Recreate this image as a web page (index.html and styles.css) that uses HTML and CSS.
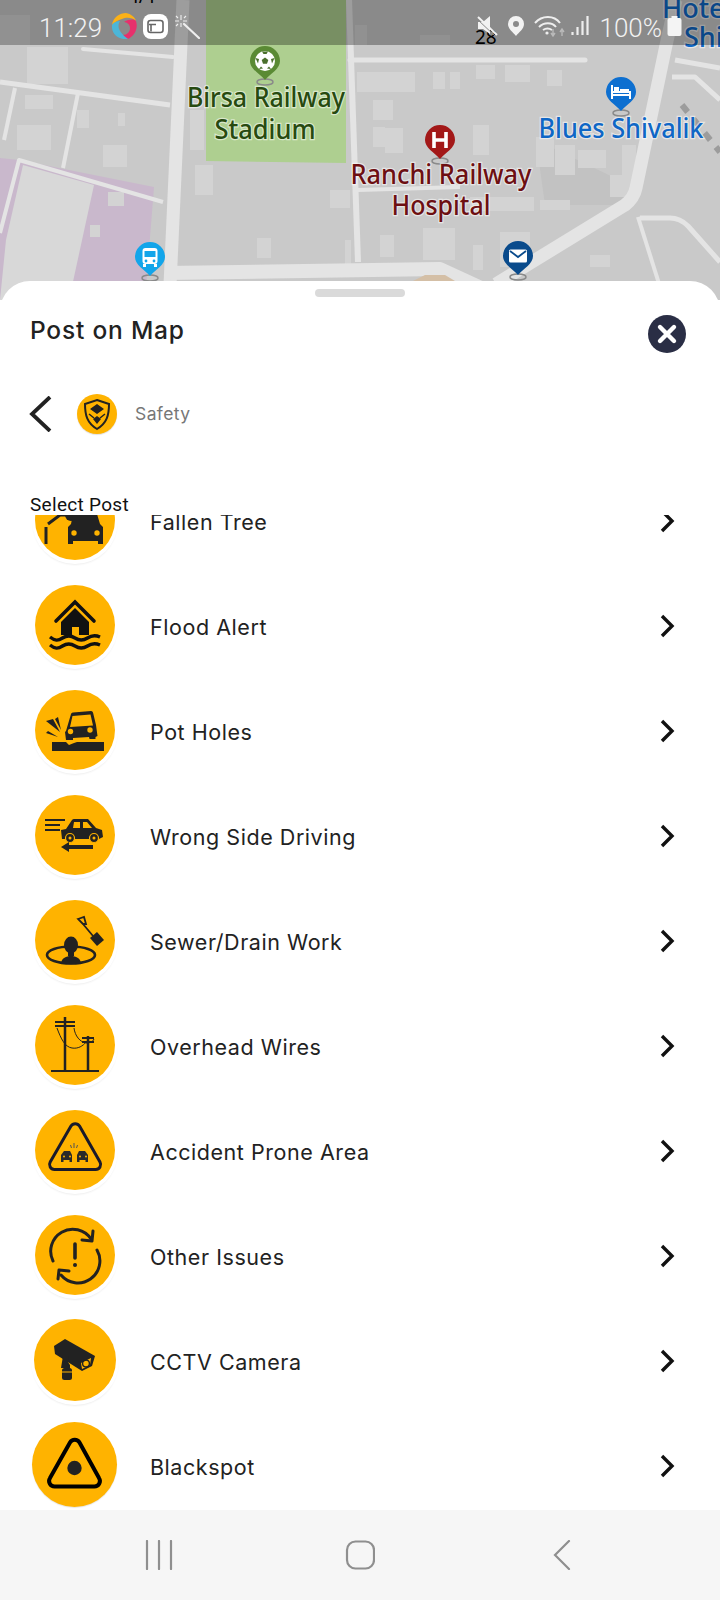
FILE: index.html
```html
<!DOCTYPE html>
<html lang="en">
<head>
<meta charset="utf-8">
<title>Post on Map</title>
<link rel="stylesheet" href="styles.css">
</head>
<body>
<div class="phone">
  <svg class="map" viewBox="0 0 720 300" width="720" height="300" aria-hidden="true">
    <rect width="720" height="300" fill="#c9c9c9"/>
    <polygon points="206,0 346,0 346,163 206,161" fill="#aecf90"/>
    <polygon points="0,158 19,160 154,187 145,300 0,300" fill="#c9b8cc"/>
    <polygon points="23,165 94,185 69,300 0,300 6,240" fill="#d8d8d8"/>
    <polygon points="536,140 640,190 630,205 545,205" fill="#c2c2c2"/>
    <g fill="#d3d3d3">
      <rect x="0" y="15" width="30" height="30"/><rect x="27" y="47" width="41" height="37"/>
      <rect x="25" y="95" width="28" height="14"/><rect x="17" y="125" width="34" height="25"/>
      <rect x="77" y="110" width="12" height="18"/><rect x="118" y="113" width="7" height="13"/>
      <rect x="103" y="145" width="24" height="22"/><rect x="195" y="165" width="18" height="30"/>
      <rect x="190" y="110" width="14" height="40"/><rect x="330" y="190" width="20" height="18"/>
      <rect x="357" y="72" width="58" height="20"/><rect x="373" y="100" width="20" height="20"/>
      <rect x="373" y="127" width="12" height="20"/><rect x="385" y="128" width="18" height="25"/>
      <rect x="433" y="72" width="12" height="17"/><rect x="450" y="72" width="10" height="17"/>
      <rect x="476" y="65" width="19" height="14"/><rect x="505" y="65" width="25" height="17"/>
      <rect x="547" y="70" width="15" height="16"/><rect x="473" y="125" width="16" height="30"/>
      <rect x="423" y="228" width="32" height="32"/><rect x="473" y="245" width="10" height="25"/>
      <rect x="500" y="232" width="30" height="35"/><rect x="536" y="137" width="18" height="30"/>
      <rect x="555" y="145" width="20" height="30"/><rect x="578" y="150" width="28" height="18"/>
      <rect x="622" y="145" width="14" height="40"/><rect x="610" y="175" width="22" height="22"/>
      <rect x="470" y="197" width="64" height="14"/><rect x="540" y="200" width="30" height="10"/>
      <rect x="257" y="238" width="14" height="20"/><rect x="345" y="240" width="6" height="25"/>
      <rect x="380" y="235" width="14" height="22"/><rect x="90" y="225" width="10" height="12"/>
      <rect x="108" y="192" width="16" height="14"/><rect x="420" y="35" width="30" height="10"/>
      <rect x="355" y="25" width="12" height="20"/><rect x="590" y="255" width="20" height="12"/>
    </g>
    <g fill="none" stroke="#e4e4e4" stroke-linejoin="round">
      <polyline points="183,0 170,285" stroke-width="13"/>
      <polyline points="349,0 358,262" stroke-width="6"/>
      <polyline points="350,60 585,60" stroke-width="5" stroke-linecap="round"/>
      <polyline points="83,49 173,57" stroke-width="4" stroke-linecap="round"/>
      <polyline points="0,82 170,105" stroke-width="5"/>
      <polyline points="15,88 4,140" stroke-width="4"/>
      <polyline points="78,93 63,168" stroke-width="4"/>
      <polyline points="0,233 19,160 163,202" stroke-width="4"/>
      <polyline points="165,273 440,269 490,292" stroke-width="14"/>
      <path d="M496 284L625 205Q634 198 636 188L665 50L676 0" stroke-width="13"/>
      <polyline points="675,60 720,68" stroke-width="5"/>
      <polyline points="672,77 695,77 720,100" stroke-width="5"/>
      <polyline points="638,217 661,290" stroke-width="4"/>
      <path d="M640 218H670Q680 218 688 226L720 262" stroke-width="5"/>
      <polyline points="358,190 460,187" stroke-width="4"/>
    </g>
    <polyline points="682,105 720,152" fill="none" stroke="#9c9c9c" stroke-width="6" stroke-dasharray="9 9"/>
    <polygon points="413,281 425,275 445,275 455,281" fill="#d4bfa6"/>

    <defs>
      <path id="pin" d="M-15 0a15 15 0 1 1 30 0c0 8-9 12-15 19c-6-7-15-11-15-19z"/>
      <ellipse id="pin-base" cx="0" cy="21" rx="8" ry="3" fill="none" stroke="#8a8a8a" stroke-width="1.5"/>
    </defs>
    <g transform="translate(265 61)">
      <use href="#pin-base"/><use href="#pin" fill="#5a8a34"/>
      <circle r="10" fill="#fff"/>
      <path d="M0-3.500l3.300 2.400-1.300 3.900h-4l-1.300-3.900z" fill="#4a6f2c"/>
      <path d="M-3-9.500L3-9.500 1.500-7h-3zM9.500-3L7 2.500 6-2zM-9.500-3L-7 2.500-6-2zM-6 8l4-.5-2-2zM6 8l-4-.5 2-2z" fill="#4a6f2c"/>
    </g>
    <g transform="translate(440 140)">
      <use href="#pin-base"/><use href="#pin" fill="#a31818"/>
      <path d="M-6-8v16M6-8v16M-6 0h12" stroke="#fff" stroke-width="3.6" fill="none"/>
    </g>
    <g transform="translate(621 92)">
      <use href="#pin-base"/><use href="#pin" fill="#0d6fd0"/>
      <path d="M-9-7v14M-9 3h18v4M-9 3v-3h18v3" stroke="#fff" stroke-width="2" fill="none"/>
      <rect x="-7" y="-5" width="5" height="5" fill="#fff"/><rect x="-1" y="-3" width="9" height="4" fill="#fff"/>
    </g>
    <g transform="translate(150 257)">
      <use href="#pin-base"/><use href="#pin" fill="#12a5ea"/>
      <rect x="-7.5" y="-9" width="15" height="16" rx="3" fill="#fff"/>
      <rect x="-5.5" y="-6" width="11" height="6" fill="#12a5ea"/>
      <circle cx="-4" cy="4" r="1.4" fill="#12a5ea"/><circle cx="4" cy="4" r="1.4" fill="#12a5ea"/>
      <rect x="-7" y="7" width="3" height="3" fill="#fff"/><rect x="4" y="7" width="3" height="3" fill="#fff"/>
    </g>
    <g transform="translate(518 256)">
      <use href="#pin-base"/><use href="#pin" fill="#0a4b8c"/>
      <rect x="-9" y="-6.5" width="18" height="13" rx="1.5" fill="#fff"/>
      <path d="M-8-5l8 6l8-6" fill="none" stroke="#0a4b8c" stroke-width="1.8"/>
    </g>

    <text class="lbl lbl-green" x="266" y="107" text-anchor="middle" textLength="158" lengthAdjust="spacingAndGlyphs">Birsa Railway</text>
    <text class="lbl lbl-green" x="265" y="139" text-anchor="middle" textLength="101" lengthAdjust="spacingAndGlyphs">Stadium</text>
    <text class="lbl lbl-red" x="441" y="184" text-anchor="middle" textLength="181" lengthAdjust="spacingAndGlyphs">Ranchi Railway</text>
    <text class="lbl lbl-red" x="441" y="215" text-anchor="middle" textLength="99" lengthAdjust="spacingAndGlyphs">Hospital</text>
    <text class="lbl lbl-blue" x="621" y="138" text-anchor="middle" textLength="165" lengthAdjust="spacingAndGlyphs">Blues Shivalik</text>
    <text class="lbl lbl-blue" x="662" y="18">Hote</text>
    <text class="lbl lbl-blue" x="684" y="47">Shi</text>
    <text class="lbl-dark" x="475" y="44">28</text>
    <text class="lbl-dark" x="128" y="3">4/1</text>
  </svg>

  <div class="status">
    <div class="status-left">
      <span class="status-text">11:29</span>
      <svg class="ic-browser" viewBox="0 0 26 26" width="26" height="26" aria-hidden="true">
        <path d="M1 12C2 4 9 0 15 0C20 1 24 4 25 8C21 4 15 4 11 6C7 7 4 9 1 12z" fill="#fbb117"/>
        <path d="M25 8C27 14 25 22 17 26C15 25 13 24 12 22C16 22 19 19 19 15C19 11 15 9 13 9C18 6 23 6 25 8z" fill="#e7306c"/>
        <path d="M17 26C9 27 2 23 1 15L1 12C3 9 6 8 9 8C7 11 7 15 9 18C11 21 14 24 17 26z" fill="#4cb6d8"/>
      </svg>
      <svg class="ic-card" viewBox="0 0 25 25" width="25" height="25" aria-hidden="true">
        <rect width="25" height="25" rx="8" fill="#fff"/>
        <rect x="5" y="6.5" width="15" height="12" rx="2.5" fill="none" stroke="#666" stroke-width="1.6"/>
        <path d="M6 10.5h7M8 10.5v7" stroke="#666" stroke-width="1.6"/>
      </svg>
      <svg class="ic-wand" viewBox="0 0 25 25" width="25" height="25" aria-hidden="true">
        <path d="M9 10l15 14" stroke="#eee" stroke-width="2.2" stroke-linecap="round"/>
        <path d="M6 1v5M6 9v4M0 7h4M8 7h4M1 2l2 2M11 2L9 4M1 12l2-2" stroke="#eee" stroke-width="1.1"/>
      </svg>
    </div>
    <div class="status-right">
      <svg viewBox="0 0 26 20" width="26" height="20" aria-hidden="true">
        <path d="M1 6h5l7-6v18l-7-5H1z" fill="#f2f2f2"/><path d="M1 1l19 18" stroke="#f2f2f2" stroke-width="2"/>
        <path d="M0 3l18 17" stroke="#8a8a8a" stroke-width="1"/>
      </svg>
      <svg viewBox="0 0 26 20" width="26" height="20" aria-hidden="true">
        <path fill-rule="evenodd" d="M13 0a8 8 0 0 1 8 8c0 5-5 8-8 12-3-4-8-7-8-12a8 8 0 0 1 8-8zm0 5a3 3 0 1 0 0 6 3 3 0 0 0 0-6z" fill="#f2f2f2"/>
      </svg>
      <svg viewBox="0 0 40 22" width="40" height="22" aria-hidden="true">
        <g fill="none" stroke="#eee" stroke-width="2">
          <path d="M6 8c7-8 19-8 25 0"/><path d="M10 12c5-5 13-5 17 0"/><path d="M14 15c3-2 6-2 9 0"/>
        </g>
        <circle cx="18" cy="18" r="1.6" fill="#eee"/>
        <path d="M24 14v7M22 18l2 3 2-3M33 21v-7M31 17l2-3 2 3" stroke="#b9b9b9" stroke-width="1.4" fill="none"/>
      </svg>
      <svg viewBox="0 0 22 20" width="22" height="20" aria-hidden="true">
        <path d="M3.5 19v-3M8.5 19V11M13.5 19V5M18.5 19V0" stroke="#eee" stroke-width="2.2"/>
      </svg>
      <span class="status-text pct">100%</span>
      <svg class="ic-battery" viewBox="0 0 15 20" width="15" height="20" aria-hidden="true">
        <path d="M4.5 0h6v2h2a2 2 0 0 1 2 2v14a2 2 0 0 1-2 2h-10a2 2 0 0 1-2-2V4a2 2 0 0 1 2-2h2z" fill="#f4f4f4"/>
      </svg>
    </div>
  </div>

  <section class="sheet">
    <div class="handle"></div>
    <header class="sheet-head">
      <h1 class="title">Post on Map</h1>
      <div class="close">
        <svg viewBox="0 0 38 38" width="38" height="38" aria-hidden="true">
          <path d="M12 12l14 14M26 12L12 26" stroke="#fff" stroke-width="4.4" stroke-linecap="round"/>
        </svg>
      </div>
    </header>
    <div class="crumb">
      <svg class="back" viewBox="0 0 24 36" width="24" height="36" aria-hidden="true">
        <path d="M22 1L4 18l18 17" fill="none" stroke="#222" stroke-width="3.8"/>
      </svg>
      <div class="icon-small">
        <svg viewBox="0 0 40 40" width="40" height="40" aria-hidden="true">
          <path d="M20 6l12 4c0 11-2 19-12 25C10 29 8 21 8 10z" fill="none" stroke="#222" stroke-width="2"/>
          <path d="M20 10l7 5-7 5-7-5zM20 22l4 3-4 5-4-5z" fill="#222"/>
          <path d="M12 20l5 4M28 20l-5 4" stroke="#222" stroke-width="1.5"/>
        </svg>
      </div>
      <span class="crumb-text">Safety</span>
    </div>
    <div class="select">Select Post</div>

    <div class="list">
      <ul class="rows">
        <li class="row">
          <div class="icon">
            <svg viewBox="0 0 80 80" aria-hidden="true">
              <path d="M11 64V47" stroke="#222" stroke-width="3"/>
              <path d="M13 44L25 35h7" fill="none" stroke="#222" stroke-width="3"/>
              <circle cx="36" cy="35" r="6" fill="#222"/>
              <path d="M38 34h24l3 10 3 3v17h-5v-3H38v3h-5V47l3-3z" fill="#222"/>
              <circle cx="39" cy="53" r="2.700" fill="#ffb300"/><circle cx="62" cy="53" r="2.700" fill="#ffb300"/>
            </svg>
          </div>
          <span class="label">Fallen Tree</span>
          <svg class="chev" viewBox="0 0 16 24" width="16" height="24" aria-hidden="true"><path d="M3 2l10 10L3 22" fill="none" stroke="#111" stroke-width="3.4"/></svg>
        </li>
        <li class="row">
          <div class="icon">
            <svg viewBox="0 0 80 80" aria-hidden="true">
              <path d="M21 36L40 17l19 19" fill="none" stroke="#111" stroke-width="3.6" stroke-linecap="round"/>
              <path d="M26 37L40 23l14 14v13H26z" fill="#111"/>
              <rect x="37" y="42" width="7" height="8" fill="#ffb300"/>
              <path d="M15 52c5 4 8 4 12.500 1s8-3 12.500 0 8 3 12.500 0 8-3 12.500-1M15 60c5 4 8 4 12.500 1s8-3 12.500 0 8 3 12.500 0 8-3 12.500-1" fill="none" stroke="#111" stroke-width="3.400"/>
            </svg>
          </div>
          <span class="label">Flood Alert</span>
          <svg class="chev" viewBox="0 0 16 24" width="16" height="24" aria-hidden="true"><path d="M3 2l10 10L3 22" fill="none" stroke="#111" stroke-width="3.4"/></svg>
        </li>
        <li class="row">
          <div class="icon">
            <svg viewBox="0 0 80 80" aria-hidden="true">
              <path d="M31 41L36 24a2 2 0 0 1 2-1.500L56 21a2 2 0 0 1 2 1.500L61 35l1.500 11-2 1v2h-6l-.5-2-16 1v2h-7l-1-8z" fill="#222"/>
              <path d="M37.500 26L55.500 24.500 58 35.500 35 37z" fill="#ffb300"/>
              <circle cx="35.500" cy="41.500" r="2.700" fill="#ffb300"/><circle cx="55" cy="40" r="2.700" fill="#ffb300"/>
              <path d="M17 52h14l3 3 5-2 3-1h27v9H17z" fill="#222"/>
              <path d="M11 31l7-2 7 13zM20 29l3-2 3 13zM11 43l2-2 10 6z" fill="#222"/>
            </svg>
          </div>
          <span class="label">Pot Holes</span>
          <svg class="chev" viewBox="0 0 16 24" width="16" height="24" aria-hidden="true"><path d="M3 2l10 10L3 22" fill="none" stroke="#111" stroke-width="3.4"/></svg>
        </li>
        <li class="row">
          <div class="icon">
            <svg viewBox="0 0 80 80" aria-hidden="true">
              <path d="M10 25h20M10 30h15M10 35h15" stroke="#222" stroke-width="1.800"/>
              <path d="M26 35l5-1 6-9a3 3 0 0 1 2-1h14l8 9 6 2 1 7-4 2H27z" fill="#222"/>
              <path d="M39 27h6v6h-7zM48 27h4l5 6h-9z" fill="#ffb300"/>
              <circle cx="35" cy="43" r="4.500" fill="#222" stroke="#ffb300" stroke-width="1.200"/><circle cx="59" cy="43" r="4.500" fill="#222" stroke="#ffb300" stroke-width="1.200"/>
              <circle cx="35" cy="43" r="1.500" fill="#ffb300"/><circle cx="59" cy="43" r="1.500" fill="#ffb300"/>
              <path d="M34 50h24v4H34v3l-8-5 8-5z" fill="#222"/>
            </svg>
          </div>
          <span class="label">Wrong Side Driving</span>
          <svg class="chev" viewBox="0 0 16 24" width="16" height="24" aria-hidden="true"><path d="M3 2l10 10L3 22" fill="none" stroke="#111" stroke-width="3.4"/></svg>
        </li>
        <li class="row">
          <div class="icon">
            <svg viewBox="0 0 80 80" aria-hidden="true">
              <ellipse cx="36" cy="55" rx="24" ry="8.500" fill="none" stroke="#222" stroke-width="2.600"/>
              <ellipse cx="36" cy="45" rx="7" ry="8.500" fill="#222"/>
              <path d="M33 52h6v4h-6z" fill="#222"/>
              <path d="M26 63c1-5 5-7 10-7s9 2 10 7c-5 1.500-15 1.500-20 0z" fill="#222"/>
              <path d="M43 19l6-2 2 7-3 0zM48 24l10 12" fill="none" stroke="#222" stroke-width="1.800"/>
              <path d="M62 32l7 8-7 6-7-8z" fill="#222"/>
            </svg>
          </div>
          <span class="label">Sewer/Drain Work</span>
          <svg class="chev" viewBox="0 0 16 24" width="16" height="24" aria-hidden="true"><path d="M3 2l10 10L3 22" fill="none" stroke="#111" stroke-width="3.4"/></svg>
        </li>
        <li class="row">
          <div class="icon">
            <svg viewBox="0 0 80 80" aria-hidden="true">
              <path d="M30 12v54M53 31v35" stroke="#222" stroke-width="2.500"/>
              <path d="M20 17h20M20 21h20M47 33h12M47 37h12" stroke="#222" stroke-width="2"/>
              <path d="M16 66h48" stroke="#222" stroke-width="1.800"/>
              <path d="M22 23c4 11 8 19 15 20 6 1 11-2 14-6M39 23c1 8 6 14 12 15 4 0 7-1 8-4" fill="none" stroke="#222" stroke-width="1"/>
            </svg>
          </div>
          <span class="label">Overhead Wires</span>
          <svg class="chev" viewBox="0 0 16 24" width="16" height="24" aria-hidden="true"><path d="M3 2l10 10L3 22" fill="none" stroke="#111" stroke-width="3.4"/></svg>
        </li>
        <li class="row">
          <div class="icon">
            <svg viewBox="0 0 80 80" aria-hidden="true">
              <path d="M36 16a5 5 0 0 1 8.500 0L65 52a5 5 0 0 1-4.300 7.500H19.500A5 5 0 0 1 15.200 52z" fill="none" stroke="#1a1a2a" stroke-width="3" stroke-linejoin="round"/>
              <path d="M29 41h6l2 4v7h-2.500v-2h-6v2H26v-7zM44 41h6l3 4v7h-2.500v-2h-6v2H42v-7z" fill="#2a2a2a"/>
              <circle cx="29" cy="46.500" r="1" fill="#ffb300"/><circle cx="35" cy="46.500" r="1" fill="#ffb300"/>
              <circle cx="45" cy="46.500" r="1" fill="#ffb300"/><circle cx="51" cy="46.500" r="1" fill="#ffb300"/>
              <path d="M39 38v-5M36.500 38l-1-3M41.500 38l1-3" stroke="#555" stroke-width="1"/>
            </svg>
          </div>
          <span class="label">Accident Prone Area</span>
          <svg class="chev" viewBox="0 0 16 24" width="16" height="24" aria-hidden="true"><path d="M3 2l10 10L3 22" fill="none" stroke="#111" stroke-width="3.4"/></svg>
        </li>
        <li class="row">
          <div class="icon">
            <svg viewBox="0 0 80 80" aria-hidden="true">
              <path d="M18 46A22 22 0 0 1 56 24M62 35A22 22 0 0 1 26 60" fill="none" stroke="#222" stroke-width="3" stroke-linecap="round"/>
              <path d="M58 16l-1 10-10-1M23 64l1-9 10 1" fill="none" stroke="#222" stroke-width="3" stroke-linecap="round" stroke-linejoin="round"/>
              <path d="M40 29v14" stroke="#222" stroke-width="3.600" stroke-linecap="round"/>
              <circle cx="40" cy="50" r="2" fill="#222"/>
            </svg>
          </div>
          <span class="label">Other Issues</span>
          <svg class="chev" viewBox="0 0 16 24" width="16" height="24" aria-hidden="true"><path d="M3 2l10 10L3 22" fill="none" stroke="#111" stroke-width="3.4"/></svg>
        </li>
        <li class="row">
          <div class="icon icon-md">
            <svg viewBox="0 0 82 82" aria-hidden="true">
              <path d="M20 27L31 20 61 37 58 47 48 52 21 35z" fill="#222"/>
              <path d="M47 44L57 39 56 46 48 50z" fill="#ffb300"/>
              <circle cx="52" cy="44.500" r="3.400" fill="none" stroke="#222" stroke-width="1.400"/>
              <path d="M29 37h6l-1 6 2 3v3h-9l1-6z" fill="#222"/>
              <rect x="28" y="49" width="10" height="12" rx="2.500" fill="#222"/>
              <path d="M28 53h10" stroke="#ffb300" stroke-width="1"/>
            </svg>
          </div>
          <span class="label">CCTV Camera</span>
          <svg class="chev" viewBox="0 0 16 24" width="16" height="24" aria-hidden="true"><path d="M3 2l10 10L3 22" fill="none" stroke="#111" stroke-width="3.4"/></svg>
        </li>
        <li class="row">
          <div class="icon icon-lg">
            <svg viewBox="0 0 85 85" aria-hidden="true">
              <path d="M38 20.500a5.500 5.500 0 0 1 9.500 0L67 56a5.500 5.500 0 0 1-4.800 8.500H22.800A5.500 5.500 0 0 1 18 56z" fill="none" stroke="#000" stroke-width="4"/>
              <circle cx="42.500" cy="46" r="7.200" fill="#222"/>
            </svg>
          </div>
          <span class="label">Blackspot</span>
          <svg class="chev" viewBox="0 0 16 24" width="16" height="24" aria-hidden="true"><path d="M3 2l10 10L3 22" fill="none" stroke="#111" stroke-width="3.4"/></svg>
        </li>
      </ul>
    </div>
  </section>

  <nav class="navbar">
    <svg viewBox="0 0 30 30" width="30" height="30" aria-hidden="true">
      <path d="M4 1v28M16 1v28M28 1v28" stroke="#8f8f8f" stroke-width="2.200" stroke-linecap="round"/>
    </svg>
    <svg viewBox="0 0 30 30" width="30" height="30" aria-hidden="true">
      <rect x="2" y="1.500" width="27" height="27" rx="8.500" fill="none" stroke="#8f8f8f" stroke-width="2.200"/>
    </svg>
    <svg viewBox="0 0 30 30" width="30" height="30" aria-hidden="true">
      <path d="M22 1L8 15l14 14" fill="none" stroke="#8f8f8f" stroke-width="2.200" stroke-linecap="round"/>
    </svg>
  </nav>
</div>
</body>
</html>
```
FILE: styles.css
```css
* { box-sizing: border-box; }
html, body { margin: 0; padding: 0; }
body { font-family: "Inter", "Liberation Sans", sans-serif; background: #fff; }

.phone {
  position: relative;
  width: 720px;
  height: 1600px;
  overflow: hidden;
  display: flex;
  flex-direction: column;
}

.map { position: absolute; top: 0; left: 0; display: block; }
.lbl {
  font-family: "Noto Sans", "Open Sans", sans-serif;
  font-size: 27px;
  font-weight: 500;
  paint-order: stroke;
  stroke: rgba(255, 255, 255, .55);
  stroke-width: 2.5px;
}
.lbl-green { fill: #274a10; }
.lbl-red { fill: #6d0f12; }
.lbl-blue { fill: #0f67c6; }
.lbl-dark { font-family: "Noto Sans", sans-serif; font-size: 19px; fill: #000; }

.status {
  position: absolute;
  top: 0;
  left: 0;
  width: 720px;
  height: 45px;
  padding: 7px 38px 0 39px;
  background: rgba(0, 0, 0, .31);
  display: flex;
  align-items: center;
  justify-content: space-between;
  color: #f2f2f2;
}
.status-left, .status-right { display: flex; align-items: center; }
.status-text {
  font-family: "Roboto", sans-serif;
  font-size: 26px;
  font-weight: 300;
  line-height: 30px;
  margin-top: 2px;
  margin-bottom: -2px;
}
.ic-browser { margin-left: 9px; }
.ic-card { margin-left: 6px; }
.ic-wand { margin-left: 7px; }
.pct { margin-left: 9px; }
.ic-battery { margin-left: 5px; }

.sheet {
  position: relative;
  margin-top: 281px;
  flex: 1;
  min-height: 0;
  background: #fff;
  border-radius: 30px 30px 0 0;
  display: flex;
  flex-direction: column;
}
.handle {
  width: 90px;
  height: 8px;
  margin: 8px auto 0;
  border-radius: 4px;
  background: #dadada;
}
.sheet-head {
  display: flex;
  justify-content: space-between;
  align-items: flex-start;
  padding: 18px 34px 0 30px;
}
.title {
  margin: 1px 0 0;
  font-size: 24.5px;
  letter-spacing: .8px;
  line-height: 28px;
  font-weight: 500;
  color: #222;
}
.close {
  width: 38px;
  height: 38px;
  border-radius: 50%;
  background: #2a2e45;
}
.close svg { display: block; }

.crumb {
  display: flex;
  align-items: center;
  margin-top: 41px;
  padding-left: 30px;
}
.back { margin-right: 25px; margin-left: -2px; }
.icon-small {
  width: 40px;
  height: 40px;
  border-radius: 50%;
  background: #ffb300;
  box-shadow: 0 1px 1px rgba(0, 0, 0, .12);
}
.icon-small svg { display: block; }
.crumb-text { margin-left: 18px; font-size: 17.5px; letter-spacing: .4px; color: #777; line-height: 22px; }

.select {
  margin-top: 60px;
  padding-left: 30px;
  font-family: "Roboto", sans-serif;
  font-size: 19px;
  letter-spacing: .3px;
  line-height: 22px;
  color: #111;
}

.list { margin-top: -1px; flex: 1; min-height: 0; overflow: hidden; }
.rows { list-style: none; margin: -46px 0 0; padding: 0; }
.row {
  height: 105px;
  display: flex;
  align-items: center;
  padding: 0 45px 0 35px;
}
.icon {
  width: 80px;
  height: 80px;
  flex: none;
  margin-bottom: 4px;
  border-radius: 50%;
  background: #ffb300;
  box-shadow: 0 1px 0 3px #fff, 0 3px 2px 2px #eee;
}
.icon svg { display: block; width: 100%; height: 100%; }
.icon-md { width: 82px; height: 82px; margin-left: -1px; margin-right: -1px; }
.icon-lg { width: 85px; height: 85px; margin-left: -3px; margin-right: -2px; box-shadow: 0 1px 1px 0 #e6e6e6; }
.label {
  margin-left: 35px;
  font-size: 21.5px;
  letter-spacing: .55px;
  line-height: 26px;
  color: #222;
}
.chev { margin-left: auto; flex: none; margin-bottom: 2px; }

.navbar {
  height: 90px;
  flex: none;
  background: #f6f6f6;
  display: flex;
  align-items: center;
  justify-content: center;
  gap: 172px;
}
```
